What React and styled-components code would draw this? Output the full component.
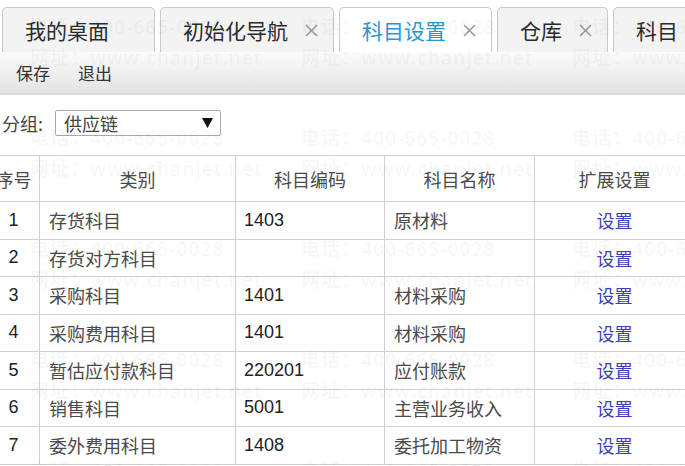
import React from "react";
import styled, { createGlobalStyle } from "styled-components";

const GlobalStyle = createGlobalStyle`
  html, body {
    margin: 0;
    padding: 0;
    background: #fff;
    overflow: hidden;
  }
  body {
    font-family: "Noto Sans CJK SC", "Liberation Sans", sans-serif;
  }
`;

const Page = styled.div`
  position: relative;
  width: 685px;
  height: 466px;
  overflow: hidden;
  background: #fff;
`;

const TabBar = styled.div`
  display: flex;
  gap: 5px;
  height: 52px;
  padding: 7px 0 0 2px;
  box-sizing: border-box;
  white-space: nowrap;
`;

const Tab = styled.div`
  display: flex;
  align-items: center;
  flex-shrink: 0;
  gap: 17px;
  padding: 0 15px 0 22px;
  border: 1px solid #c9c9c9;
  border-bottom: none;
  border-radius: 5px 5px 0 0;
  background: ${(p) => (p.$active ? "#fff" : "#f3f3f3")};
  color: ${(p) => (p.$active ? "#2898cf" : "#2b2b2b")};
  font-size: 21px;
  line-height: 1;
`;

const Close = styled.svg`
  width: 13px;
  height: 13px;
  visibility: ${(p) => (p.$hidden ? "hidden" : "visible")};
`;

const Toolbar = styled.div`
  display: flex;
  align-items: center;
  gap: 28px;
  height: 41px;
  padding-left: 16px;
  background: linear-gradient(#fbfbfb, #e3e3e3);
  border-bottom: 2px solid #dcdcdc;
  font-size: 17px;
  color: #333;
`;

const FilterRow = styled.div`
  display: flex;
  align-items: center;
  gap: 12px;
  margin-top: 15px;
  padding-left: 2px;
  font-size: 18px;
  color: #444;
`;

const Select = styled.div`
  display: flex;
  align-items: center;
  justify-content: space-between;
  width: 166px;
  height: 26px;
  box-sizing: border-box;
  padding: 0 7px 0 8px;
  border: 1px solid #a9a9a9;
  border-radius: 2px;
`;

const Caret = styled.svg`
  width: 11px;
  height: 10px;
`;

const Table = styled.table`
  margin: 19px 0 0 -13px;
  width: 707px;
  table-layout: fixed;
  border-collapse: collapse;
  font-size: 18px;
  color: #4a4a4a;
`;

const HeadCell = styled.th`
  height: 45px;
  padding: 0;
  border: 1px solid #d2d2d2;
  font-weight: normal;
  text-align: center;
`;

const Cell = styled.td`
  height: 36.5px;
  padding: 0 ${(p) => (p.$num ? "8px" : "9px")};
  border: 1px solid #d2d2d2;
  text-align: ${(p) => (p.$center ? "center" : "left")};
  font-family: ${(p) =>
    p.$num ? '"Liberation Sans", Arial, sans-serif' : "inherit"};
  color: ${(p) => (p.$num ? "#222" : "inherit")};
`;

const Link = styled.a`
  color: #3d3dc2;
  text-decoration: none;
`;

// faint contact stamp tiled over the whole page
const Watermark = styled.div`
  position: absolute;
  inset: 0;
  pointer-events: none;
  display: grid;
  grid-template-columns: repeat(3, 271px);
  grid-auto-rows: 111px;
  padding: 16px 0 0 30px;
`;

const Stamp = styled.div`
  display: flex;
  flex-direction: column;
  gap: 9px;
  font-family: "Open Sans", "Noto Sans CJK SC", sans-serif;
  font-size: 19px;
  font-weight: 600;
  letter-spacing: 1.1px;
  line-height: 22px;
  color: rgba(0, 0, 0, 0.045);
  white-space: nowrap;
`;

const tabs = [
  { label: "我的桌面", closable: false },
  { label: "初始化导航", closable: true },
  { label: "科目设置", closable: true, active: true },
  { label: "仓库", closable: true },
  { label: "科目", closable: true },
];

const rows = [
  ["存货科目", "1403", "原材料"],
  ["存货对方科目", "", ""],
  ["采购科目", "1401", "材料采购"],
  ["采购费用科目", "1401", "材料采购"],
  ["暂估应付款科目", "220201", "应付账款"],
  ["销售科目", "5001", "主营业务收入"],
  ["委外费用科目", "1408", "委托加工物资"],
];

const CloseIcon = ({ hidden }) => (
  <Close viewBox="0 0 13 13" $hidden={hidden}>
    <path d="M1 1L12 12M12 1L1 12" stroke="#9b9b9b" strokeWidth="1.6" />
  </Close>
);

export default function App() {
  return (
    <Page>
      <GlobalStyle />
      <TabBar>
        {tabs.map((t) => (
          <Tab key={t.label} $active={t.active}>
            <span>{t.label}</span>
            <CloseIcon hidden={!t.closable} />
          </Tab>
        ))}
      </TabBar>
      <Toolbar>
        <span>保存</span>
        <span>退出</span>
      </Toolbar>
      <FilterRow>
        <span>分组:</span>
        <Select>
          <span>供应链</span>
          <Caret viewBox="0 0 11 10">
            <path d="M0 0H11L5.5 10Z" fill="#111" />
          </Caret>
        </Select>
      </FilterRow>
      <Table>
        <colgroup>
          <col style={{ width: 52 }} />
          <col style={{ width: 196 }} />
          <col style={{ width: 149 }} />
          <col style={{ width: 150 }} />
          <col style={{ width: 160 }} />
        </colgroup>
        <thead>
          <tr>
            <HeadCell>序号</HeadCell>
            <HeadCell>类别</HeadCell>
            <HeadCell>科目编码</HeadCell>
            <HeadCell>科目名称</HeadCell>
            <HeadCell>扩展设置</HeadCell>
          </tr>
        </thead>
        <tbody>
          {rows.map(([kind, code, name], i) => (
            <tr key={kind}>
              <Cell $center $num>
                {i + 1}
              </Cell>
              <Cell>{kind}</Cell>
              <Cell $num>{code}</Cell>
              <Cell>{name}</Cell>
              <Cell $center>
                <Link href="#">设置</Link>
              </Cell>
            </tr>
          ))}
        </tbody>
      </Table>
      <Watermark>
        {Array.from({ length: 15 }).map((_, i) => (
          <Stamp key={i}>
            <span>电话：400-665-0028</span>
            <span>网址：www.chanjet.net</span>
          </Stamp>
        ))}
      </Watermark>
    </Page>
  );
}
